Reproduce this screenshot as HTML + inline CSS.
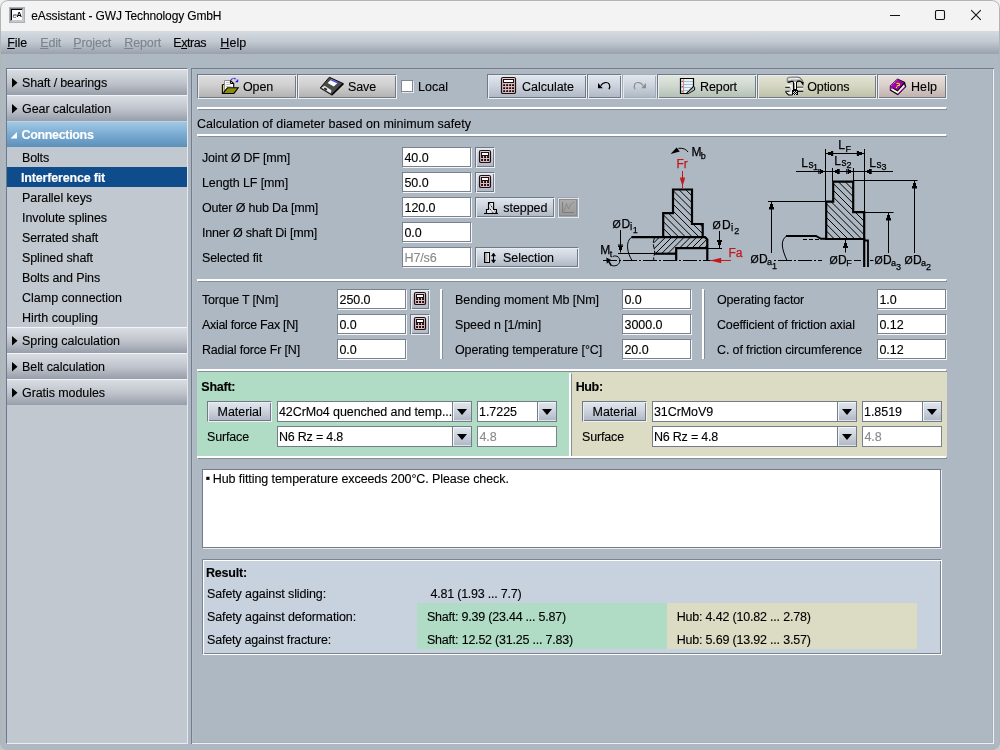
<!DOCTYPE html>
<html><head><meta charset="utf-8"><title>eAssistant - GWJ Technology GmbH</title>
<style>
*{box-sizing:border-box;margin:0;padding:0}
html,body{width:1000px;height:750px;overflow:hidden;background:#efefef}
#cbl,#cbr{position:absolute;bottom:0;width:12px;height:12px;background:#c4c4c4}
#cbl{left:0}#cbr{right:0;background:#cdcdcd}
#frame{position:absolute;left:0;top:0;width:1000px;height:750px;border:1px solid #b4b4b4;border-radius:8px;pointer-events:none}
body{font-family:"Liberation Sans",sans-serif;font-size:12.5px;color:#000;position:relative}
#win{position:absolute;left:0;top:0;width:1000px;height:750px;background:#aeb8c3;border-radius:8px;overflow:hidden;will-change:transform}
#title{position:absolute;left:0;top:0;width:1000px;height:31px;background:#f3f3f3}
#ttext{letter-spacing:-0.14px;font-size:12px}
#menu{position:absolute;left:0;top:31px;width:1000px;height:23px;background:linear-gradient(#d5dbe1,#c3cad2 45%,#98a1ad)}
.t{position:absolute;white-space:nowrap;line-height:14px;-webkit-text-stroke:0.12px currentColor}
.b{font-weight:bold}
.w{color:#fff}
.dis{color:#8a8a8a}
.m.dis{color:#7c838c}
.m u{text-decoration:underline;text-underline-offset:1px}
#side{position:absolute;left:6px;top:68px;width:182px;height:676px;background:#c2c8d0;border-left:1px solid #6f7a86;border-top:1px solid #6f7a86;border-right:1px solid #e4e8ec;border-bottom:1px solid #e9edf1}
.hdr{position:absolute;left:7px;width:180px;height:26px;border-top:1px solid #f2f4f6;background:linear-gradient(#d9dde3,#c0c5cd 50%,#989eaa)}
.hdr.open{background:linear-gradient(#a3c7e3,#79abd2 50%,#5d90b9);border-top:1px solid #b9d5ea}
.it{position:absolute;left:7px;width:180px;height:20px}
.it.sel{background:#0f4c8c}
.hline{position:absolute;height:1px;background:#eef1f4}
#main{position:absolute;left:191px;top:68px;width:803px;height:676px;box-shadow:inset 1px 1px 0 #737d89, inset -1px -1px 0 #eef1f4, inset -2px -2px 0 #a6b0bb, inset 2px 2px 0 #b4bec9}
.btn{position:absolute;border-top:1px solid #707985;border-left:1px solid #707985;border-right:1px solid #eef1f4;border-bottom:1px solid #eef1f4;box-shadow:inset 1px 1px 0 #e9edf1, inset -1px -1px 0 #707985}
.btn.grey{background:linear-gradient(#dedede,#cfcfcf 45%,#b0b0b0)}
.btn.blue{background:linear-gradient(#e2e7ee,#cdd4de 45%,#adb6c3)}
.btn.green{background:linear-gradient(#e0e7e0,#d0d9d0 45%,#b3bfb3)}
.btn.olive{background:linear-gradient(#e2e3d4,#d5d7c3 45%,#bcbfa6)}
.btn.pink{background:linear-gradient(#e8e1de,#dacfcb 45%,#beb0ac)}
.btn.gdis{background:#aeb8c3;box-shadow:inset 1px 1px 0 #dde3ea, inset -1px -1px 0 #9ba5b0;border-color:#9ba5b0 #e3e8ee #e3e8ee #9ba5b0}
.btn.disb{box-shadow:inset 1px 1px 0 #e3e8ed, inset -1px -1px 0 #a3adb8;border-color:#a3adb8 #dfe4e9 #dfe4e9 #a3adb8}
.chk{position:absolute;width:12px;height:12px;background:#fff;border:1px solid #7f8893;box-shadow:1px 1px 0 #e6eaee}
.sep{position:absolute;height:3px;border-left:1px solid #fff;border-top:2px solid #fff;border-bottom:1px solid #858d97;border-right:1px solid #858d97}
.vsep{position:absolute;width:3px;border-top:1px solid #fff;border-left:2px solid #fff;border-right:1px solid #858d97}
.vsepw{position:absolute;width:3px;background:#fff;border-right:1px solid #9aa3ad}
.inp{position:absolute;height:20px;background:#fff;border:1px solid #79828d;box-shadow:1px 1px 0 #f4f6f8}
.inp.box{height:21px;box-shadow:none}
.combo{position:absolute;height:21px;background:#fff;border:1px solid #737c87}
.combo i{position:absolute;right:0;top:0;width:19px;height:19px;background:linear-gradient(#e2e7ee,#cdd4de 45%,#adb6c3);border-left:1px solid #737c87;box-shadow:inset 1px 1px 0 #f4f6f9, inset 0 -1px 0 #dfe4ea}
.combo i b{position:absolute;left:3.5px;top:7px;width:0;height:0;border-left:5px solid transparent;border-right:5px solid transparent;border-top:6px solid #000}
.pan{position:absolute}
#diasvg text{stroke:#000;stroke-width:.25px}
#diasvg text[fill]{stroke:#c4161c}
#msg{position:absolute;left:202px;top:469px;width:739px;height:79px;background:#fff;border:1px solid #737c87;box-shadow:1px 1px 0 #e8ecf0}
#res{position:absolute;left:202px;top:559px;width:740px;height:96px;background:#c8d2de;border-top:1px solid #7b8590;border-left:1px solid #7b8590;border-right:1px solid #fff;border-bottom:1px solid #fff;box-shadow:inset 1px 1px 0 #fff, inset -1px -1px 0 #7b8590}
</style></head>
<body><div id="cbl"></div><div id="cbr"></div><div id="win">
<div id="title"></div>
<div class="t" id="ttext" style="left:31.3px;top:9px">eAssistant - GWJ Technology GmbH</div>
<svg id="wc" width="110" height="31" viewBox="0 0 110 31" style="position:absolute;left:885px;top:0">
<path d="M5 15.5h10" stroke="#111" stroke-width="1" fill="none"/>
<rect x="50.5" y="10.5" width="9" height="9" rx="1.2" stroke="#111" stroke-width="1.1" fill="none"/>
<path d="M86.2 10.2l9.6 9.6M95.8 10.2l-9.6 9.6" stroke="#111" stroke-width="1.1" fill="none"/></svg>
<div id="menu"></div>
<div class="t m " style="left:7.2px;top:36px;letter-spacing:-0.035px;"><u>F</u>ile</div>
<div class="t m dis" style="left:40.2px;top:36px;letter-spacing:-0.135px;"><u>E</u>dit</div>
<div class="t m dis" style="left:73.2px;top:36px;letter-spacing:-0.129px;"><u>P</u>roject</div>
<div class="t m dis" style="left:124.2px;top:36px;letter-spacing:-0.086px;"><u>R</u>eport</div>
<div class="t m " style="left:173.2px;top:36px;letter-spacing:-0.404px;">E<u>x</u>tras</div>
<div class="t m " style="left:220.3px;top:36px;letter-spacing:0.073px;"><u>H</u>elp</div>
<div id="side"></div>
<div class="hdr" style="top:69px"><svg width="8" height="10" viewBox="0 0 8 10" style="position:absolute;left:5px;top:8px"><path d="M0 0L5.5 4.75L0 9.5Z" fill="#000"/></svg></div>
<div class="t " style="left:22px;top:76px;letter-spacing:-0.160px;">Shaft / bearings</div>
<div class="hdr" style="top:95px"><svg width="8" height="10" viewBox="0 0 8 10" style="position:absolute;left:5px;top:8px"><path d="M0 0L5.5 4.75L0 9.5Z" fill="#000"/></svg></div>
<div class="t " style="left:22px;top:102px;letter-spacing:-0.083px;">Gear calculation</div>
<div class="hdr open" style="top:121px"><svg width="8" height="10" viewBox="0 0 8 10" style="position:absolute;left:3px;top:10px"><path d="M7 0V6.5H0.5Z" fill="#fff"/></svg></div>
<div class="t b w" style="left:21.5px;top:128px;letter-spacing:-0.336px;">Connections</div>
<div class="t " style="left:22px;top:151px;letter-spacing:-0.158px;">Bolts</div>
<div class="it sel" style="top:167px"></div>
<div class="t b w" style="left:21px;top:171px;letter-spacing:-0.177px;">Interference fit</div>
<div class="t " style="left:22px;top:191px;letter-spacing:-0.066px;">Parallel keys</div>
<div class="t " style="left:22px;top:211px;letter-spacing:-0.073px;">Involute splines</div>
<div class="t " style="left:22px;top:231px;letter-spacing:-0.180px;">Serrated shaft</div>
<div class="t " style="left:22px;top:251px;letter-spacing:-0.098px;">Splined shaft</div>
<div class="t " style="left:22px;top:271px;letter-spacing:-0.136px;">Bolts and Pins</div>
<div class="t " style="left:22px;top:291px;letter-spacing:-0.003px;">Clamp connection</div>
<div class="t " style="left:22px;top:311px;letter-spacing:-0.031px;">Hirth coupling</div>
<div class="hdr" style="top:327px"><svg width="8" height="10" viewBox="0 0 8 10" style="position:absolute;left:5px;top:8px"><path d="M0 0L5.5 4.75L0 9.5Z" fill="#000"/></svg></div>
<div class="t " style="left:22px;top:334px;letter-spacing:-0.037px;">Spring calculation</div>
<div class="hdr" style="top:353px"><svg width="8" height="10" viewBox="0 0 8 10" style="position:absolute;left:5px;top:8px"><path d="M0 0L5.5 4.75L0 9.5Z" fill="#000"/></svg></div>
<div class="t " style="left:22px;top:360px;letter-spacing:-0.067px;">Belt calculation</div>
<div class="hdr" style="top:379px"><svg width="8" height="10" viewBox="0 0 8 10" style="position:absolute;left:5px;top:8px"><path d="M0 0L5.5 4.75L0 9.5Z" fill="#000"/></svg></div>
<div class="t " style="left:22px;top:386px;letter-spacing:-0.076px;">Gratis modules</div>
<div id="main"></div>
<div class="btn grey" style="left:197px;top:74px;width:100px;height:25px"></div>
<div class="t " style="left:243px;top:80px;letter-spacing:-0.145px;">Open</div>
<div class="btn grey" style="left:297px;top:74px;width:100px;height:25px"></div>
<div class="t " style="left:348px;top:80px;letter-spacing:-0.123px;">Save</div>
<div class="chk" style="left:401px;top:80px"></div>
<div class="t " style="left:418px;top:80px;letter-spacing:0.023px;">Local</div>
<div class="btn blue" style="left:487px;top:74px;width:100px;height:25px"></div>
<div class="t " style="left:522px;top:80px;letter-spacing:-0.012px;">Calculate</div>
<div class="btn blue" style="left:587px;top:74px;width:35px;height:25px"></div>
<div class="btn blue disb" style="left:622px;top:74px;width:35px;height:25px"></div>
<div class="btn green" style="left:657px;top:74px;width:100px;height:25px"></div>
<div class="t " style="left:700px;top:80px;letter-spacing:-0.086px;">Report</div>
<div class="btn olive" style="left:757px;top:74px;width:120px;height:25px"></div>
<div class="t " style="left:807.3px;top:80px;letter-spacing:-0.154px;">Options</div>
<div class="btn pink" style="left:877px;top:74px;width:70px;height:25px"></div>
<div class="t " style="left:911px;top:80px;letter-spacing:0.073px;">Help</div>
<div class="sep" style="left:197px;top:107px;width:750px"></div>
<div class="t " style="left:197px;top:117px;letter-spacing:0.005px;">Calculation of diameter based on minimum safety</div>
<div class="sep" style="left:197px;top:134px;width:750px"></div>
<div class="t " style="left:202px;top:151px;letter-spacing:-0.199px;">Joint Ø DF [mm]</div>
<div class="inp " style="left:402px;top:147px;width:69px"></div>
<div class="t " style="left:404.5px;top:151px;letter-spacing:-0.082px;">40.0</div>
<div class="t " style="left:202px;top:176px;letter-spacing:-0.110px;">Length LF [mm]</div>
<div class="inp " style="left:402px;top:172px;width:69px"></div>
<div class="t " style="left:404.5px;top:176px;letter-spacing:-0.082px;">50.0</div>
<div class="t " style="left:202px;top:201px;letter-spacing:-0.183px;">Outer Ø hub Da [mm]</div>
<div class="inp " style="left:402px;top:197px;width:69px"></div>
<div class="t " style="left:404.5px;top:201px;letter-spacing:-0.056px;">120.0</div>
<div class="t " style="left:202px;top:226px;letter-spacing:-0.180px;">Inner Ø shaft Di [mm]</div>
<div class="inp " style="left:402px;top:222px;width:69px"></div>
<div class="t " style="left:404.5px;top:226px;letter-spacing:-0.126px;">0.0</div>
<div class="t " style="left:202px;top:251px;letter-spacing:-0.153px;">Selected fit</div>
<div class="inp dis" style="left:402px;top:247px;width:69px"></div>
<div class="t dis" style="left:404.5px;top:251px;letter-spacing:-0.131px;">H7/s6</div>
<div class="btn blue" style="left:475px;top:147px;width:20px;height:21px"></div>
<div class="btn blue" style="left:475px;top:172px;width:20px;height:21px"></div>
<div class="btn blue" style="left:475px;top:197px;width:80px;height:21px"></div>
<div class="t " style="left:503.3px;top:201px;letter-spacing:-0.069px;">stepped</div>
<div class="btn gdis" style="left:557px;top:197px;width:22px;height:21px"></div>
<div class="btn blue" style="left:475px;top:247px;width:104px;height:21px"></div>
<div class="t " style="left:503px;top:251px;letter-spacing:-0.047px;">Selection</div>
<svg id="diasvg" width="360" height="142" viewBox="595 137 360 142" style="position:absolute;left:595px;top:137px" font-family="Liberation Sans, sans-serif" font-size="12px"><defs></defs><clipPath id="cl1"><polygon points="673,189.5 692,189.5 692,224 702.7,224 702.7,237 663.2,237 663.2,213.2 673,213.2"/></clipPath><g clip-path="url(#cl1)" stroke="#000" stroke-width="1.0" shape-rendering="geometricPrecision"><line x1="602.5" y1="188" x2="652.5" y2="238"/><line x1="609.3" y1="188" x2="659.3" y2="238"/><line x1="616.1" y1="188" x2="666.1" y2="238"/><line x1="622.9" y1="188" x2="672.9" y2="238"/><line x1="629.7" y1="188" x2="679.7" y2="238"/><line x1="636.5" y1="188" x2="686.5" y2="238"/><line x1="643.3" y1="188" x2="693.3" y2="238"/><line x1="650.1" y1="188" x2="700.1" y2="238"/><line x1="656.9" y1="188" x2="706.9" y2="238"/><line x1="663.7" y1="188" x2="713.7" y2="238"/><line x1="670.5" y1="188" x2="720.5" y2="238"/><line x1="677.3" y1="188" x2="727.3" y2="238"/><line x1="684.1" y1="188" x2="734.1" y2="238"/><line x1="690.9" y1="188" x2="740.9" y2="238"/><line x1="697.7" y1="188" x2="747.7" y2="238"/><line x1="704.5" y1="188" x2="754.5" y2="238"/><line x1="711.3" y1="188" x2="761.3" y2="238"/><line x1="718.1" y1="188" x2="768.1" y2="238"/><line x1="724.9" y1="188" x2="774.9" y2="238"/><line x1="731.7" y1="188" x2="781.7" y2="238"/><line x1="738.5" y1="188" x2="788.5" y2="238"/><line x1="745.3" y1="188" x2="795.3" y2="238"/><line x1="752.1" y1="188" x2="802.1" y2="238"/><line x1="758.9" y1="188" x2="808.9" y2="238"/><line x1="765.7" y1="188" x2="815.7" y2="238"/></g><polygon points="673,189.5 692,189.5 692,224 702.7,224 702.7,237 663.2,237 663.2,213.2 673,213.2" fill="none" stroke="#000" stroke-width="2.2" stroke-linejoin="miter"/><clipPath id="cl2"><polygon points="654,237 707,237 707,248 676,248 676,253.5 654,253.5"/></clipPath><g clip-path="url(#cl2)" stroke="#000" stroke-width="1.0" shape-rendering="geometricPrecision"><line x1="641.0" y1="237" x2="624.0" y2="254"/><line x1="647.2" y1="237" x2="630.2" y2="254"/><line x1="653.4" y1="237" x2="636.4" y2="254"/><line x1="659.6" y1="237" x2="642.6" y2="254"/><line x1="665.8" y1="237" x2="648.8" y2="254"/><line x1="672.0" y1="237" x2="655.0" y2="254"/><line x1="678.2" y1="237" x2="661.2" y2="254"/><line x1="684.4" y1="237" x2="667.4" y2="254"/><line x1="690.6" y1="237" x2="673.6" y2="254"/><line x1="696.8" y1="237" x2="679.8" y2="254"/><line x1="703.0" y1="237" x2="686.0" y2="254"/><line x1="709.2" y1="237" x2="692.2" y2="254"/><line x1="715.4" y1="237" x2="698.4" y2="254"/><line x1="721.6" y1="237" x2="704.6" y2="254"/><line x1="727.8" y1="237" x2="710.8" y2="254"/><line x1="734.0" y1="237" x2="717.0" y2="254"/><line x1="740.2" y1="237" x2="723.2" y2="254"/><line x1="746.4" y1="237" x2="729.4" y2="254"/><line x1="752.6" y1="237" x2="735.6" y2="254"/></g><path d="M631.5,237.2H705L707.3,239.5V260.5" fill="none" stroke="#000" stroke-width="2.2"/><path d="M707,248.2H676.2V260.5" fill="none" stroke="#000" stroke-width="2.2"/><path d="M654,253.7H676.5" fill="none" stroke="#000" stroke-width="2.2"/><path d="M618,253.5H654" fill="none" stroke="#000" stroke-width="1"/><path d="M603,260.5H710" fill="none" stroke="#000" stroke-width="1" stroke-dasharray="14 2 2 2"/><path d="M632,237C628.5,239 627.3,243 627.6,248C628,253 630,257 632,260.5" fill="none" stroke="#000" stroke-width="1"/><path d="M654.5,238C653,241 653,244 653.8,247C654.8,250 655,253 654,256C653.5,258 653.5,259 654,260.5" fill="none" stroke="#000" stroke-width="1" stroke-dasharray="5 1.5"/><path d="M708,248.5H722" stroke="#000" stroke-width="1"/><text x="612.5" y="227.5" font-size="10.5px">Ø</text><text x="621.5" y="227.5">D</text><text x="630" y="229.5" font-size="10px">i</text><text x="632.8" y="233" font-size="9px">1</text><line x1="620.5" y1="230" x2="620.5" y2="252.5" stroke="#000" stroke-width="1"/><polygon points="618.0,245.5 623.0,245.5 620.5,252.5" fill="#000" shape-rendering="crispEdges"/><rect x="618.0" y="244.5" width="5.0" height="1.2" fill="#000"/><text x="712.5" y="229" font-size="10.5px">Ø</text><text x="722" y="228.5">D</text><text x="731" y="230.5" font-size="10px">i</text><text x="734.3" y="234" font-size="9px">2</text><line x1="719.5" y1="231" x2="719.5" y2="248" stroke="#000" stroke-width="1"/><polygon points="717.0,241 722.0,241 719.5,248" fill="#000" shape-rendering="crispEdges"/><rect x="717.0" y="240" width="5.0" height="1.2" fill="#000"/><text x="600.3" y="254">M</text><text x="609.8" y="256.5" font-size="9px">t</text><path d="M613,256.3C617,255 620,257.5 619.8,261C619.5,264.5 616,266.8 611.5,265.5" fill="none" stroke="#000" stroke-width="1"/><polygon points="606.3,257.6 611.3,260 609.5,261.3 612,265.3 610.5,266 608.3,262.3 606.8,263.8" fill="#000"/><text x="676.5" y="168.3" fill="#c4161c">Fr</text><line x1="682.5" y1="171" x2="682.5" y2="188.5" stroke="#c4161c" stroke-width="1"/><polygon points="680,178.5 685,178.5 682.5,186" fill="#c4161c"/><rect x="680" y="177.5" width="5" height="1.2" fill="#c4161c"/><text x="728.5" y="256.8" fill="#c4161c">Fa</text><line x1="710" y1="260.5" x2="731" y2="260.5" stroke="#c4161c" stroke-width="1"/><polygon points="710,260.5 720.5,258 720.5,263" fill="#c4161c"/><rect x="720" y="258" width="1.2" height="5" fill="#c4161c"/><text x="691.5" y="156.3">M</text><text x="700.8" y="158.8" font-size="9px">b</text><path d="M688,152C686.5,149.5 683,147.8 678.5,148.3" fill="none" stroke="#000" stroke-width="1"/><polygon points="670.6,154 676.6,147.6 679.8,151.4" fill="#000"/><clipPath id="cl3"><polygon points="833.2,181.7 853.2,181.7 853.2,212.2 864.2,212.2 864.2,239 826.2,239 826.2,201.7 833.2,201.7"/></clipPath><g clip-path="url(#cl3)" stroke="#000" stroke-width="1.0" shape-rendering="geometricPrecision"><line x1="755.0" y1="180" x2="815.0" y2="240"/><line x1="761.8" y1="180" x2="821.8" y2="240"/><line x1="768.6" y1="180" x2="828.6" y2="240"/><line x1="775.4" y1="180" x2="835.4" y2="240"/><line x1="782.2" y1="180" x2="842.2" y2="240"/><line x1="789.0" y1="180" x2="849.0" y2="240"/><line x1="795.8" y1="180" x2="855.8" y2="240"/><line x1="802.6" y1="180" x2="862.6" y2="240"/><line x1="809.4" y1="180" x2="869.4" y2="240"/><line x1="816.2" y1="180" x2="876.2" y2="240"/><line x1="823.0" y1="180" x2="883.0" y2="240"/><line x1="829.8" y1="180" x2="889.8" y2="240"/><line x1="836.6" y1="180" x2="896.6" y2="240"/><line x1="843.4" y1="180" x2="903.4" y2="240"/><line x1="850.2" y1="180" x2="910.2" y2="240"/><line x1="857.0" y1="180" x2="917.0" y2="240"/><line x1="863.8" y1="180" x2="923.8" y2="240"/><line x1="870.6" y1="180" x2="930.6" y2="240"/><line x1="877.4" y1="180" x2="937.4" y2="240"/><line x1="884.2" y1="180" x2="944.2" y2="240"/><line x1="891.0" y1="180" x2="951.0" y2="240"/><line x1="897.8" y1="180" x2="957.8" y2="240"/><line x1="904.6" y1="180" x2="964.6" y2="240"/><line x1="911.4" y1="180" x2="971.4" y2="240"/><line x1="918.2" y1="180" x2="978.2" y2="240"/><line x1="925.0" y1="180" x2="985.0" y2="240"/><line x1="931.8" y1="180" x2="991.8" y2="240"/></g><polygon points="833.2,181.7 853.2,181.7 853.2,212.2 864.2,212.2 864.2,239 826.2,239 826.2,201.7 833.2,201.7" fill="none" stroke="#000" stroke-width="2.2" stroke-linejoin="miter"/><path d="M825.5,149V201M864.5,149V212M832.5,168V181M853.5,168V181" stroke="#000" stroke-width="1" fill="none"/><path d="M826,153.5H864" stroke="#000" stroke-width="1"/><polygon points="832,151.0 832,156.0 826,153.5" fill="#000" shape-rendering="crispEdges"/><rect x="832" y="151.0" width="1.2" height="5.0" fill="#000"/><polygon points="858,151.0 858,156.0 864,153.5" fill="#000" shape-rendering="crispEdges"/><rect x="856.8" y="151.0" width="1.2" height="5.0" fill="#000"/><text x="838.3" y="148.7">L</text><text x="845.5" y="151.7" font-size="9px">F</text><path d="M796,171.5H893" stroke="#000" stroke-width="1"/><polygon points="819.5,169.0 819.5,174.0 825.5,171.5" fill="#000" shape-rendering="crispEdges"/><rect x="818.3" y="169.0" width="1.2" height="5.0" fill="#000"/><polygon points="838.5,169.0 838.5,174.0 832.5,171.5" fill="#000" shape-rendering="crispEdges"/><rect x="838.5" y="169.0" width="1.2" height="5.0" fill="#000"/><polygon points="847.5,169.0 847.5,174.0 853.5,171.5" fill="#000" shape-rendering="crispEdges"/><rect x="846.3" y="169.0" width="1.2" height="5.0" fill="#000"/><polygon points="870.5,169.0 870.5,174.0 864.5,171.5" fill="#000" shape-rendering="crispEdges"/><rect x="870.5" y="169.0" width="1.2" height="5.0" fill="#000"/><text x="801.3" y="167.2">L</text><text x="808.5" y="168.2" font-size="10px">s</text><text x="813" y="169.7" font-size="9px">1</text><text x="834.3" y="165.2">L</text><text x="841.5" y="166.2" font-size="10px">s</text><text x="846.5" y="167.7" font-size="9px">2</text><text x="869.3" y="167.2">L</text><text x="876.5" y="168.2" font-size="10px">s</text><text x="881.5" y="169.7" font-size="9px">3</text><path d="M854,180.5H917.5" stroke="#000" stroke-width="1"/><line x1="914.5" y1="253" x2="914.5" y2="180.5" stroke="#000" stroke-width="1"/><polygon points="912.0,187.5 917.0,187.5 914.5,180.5" fill="#000" shape-rendering="crispEdges"/><rect x="912.0" y="187.3" width="5.0" height="1.2" fill="#000"/><text x="904.5" y="263.5" font-size="10.5px">Ø</text><text x="913" y="263.5">D</text><text x="921" y="265.5" font-size="9px">a</text><text x="926" y="270" font-size="9px">2</text><path d="M865,212.5H893.5" stroke="#000" stroke-width="1"/><line x1="888.5" y1="253" x2="888.5" y2="212.5" stroke="#000" stroke-width="1"/><polygon points="886.0,219.5 891.0,219.5 888.5,212.5" fill="#000" shape-rendering="crispEdges"/><rect x="886.0" y="219.3" width="5.0" height="1.2" fill="#000"/><text x="874.5" y="263.5" font-size="10.5px">Ø</text><text x="883" y="263.5">D</text><text x="891" y="265.5" font-size="9px">a</text><text x="896" y="270" font-size="9px">3</text><path d="M768,201.5H825" stroke="#000" stroke-width="1"/><line x1="771.5" y1="253" x2="771.5" y2="201.5" stroke="#000" stroke-width="1"/><polygon points="769.0,208.5 774.0,208.5 771.5,201.5" fill="#000" shape-rendering="crispEdges"/><rect x="769.0" y="208.3" width="5.0" height="1.2" fill="#000"/><text x="750.5" y="263" font-size="10.5px">Ø</text><text x="759" y="263">D</text><text x="767" y="264.7" font-size="9px">a</text><text x="772" y="269.3" font-size="9px">1</text><line x1="845.5" y1="252.5" x2="845.5" y2="240" stroke="#000" stroke-width="1"/><polygon points="843.0,247 848.0,247 845.5,240" fill="#000" shape-rendering="crispEdges"/><rect x="843.0" y="246.8" width="5.0" height="1.2" fill="#000"/><text x="829.5" y="263.7" font-size="10.5px">Ø</text><text x="838" y="263.7">D</text><text x="846.3" y="266" font-size="9px">F</text><path d="M854,260.5H861M870,260.5H873.5" stroke="#000" stroke-width="1"/><path d="M864.2,238V267" stroke="#000" stroke-width="2.2"/><path d="M865,240.5H868V267" stroke="#000" stroke-width="1.8" fill="none"/><path d="M786,236H816L821,238.8H826" fill="none" stroke="#000" stroke-width="2"/><path d="M786.5,236C783.5,238 782.3,241 782.3,245C782.5,250 785,256 787,260.5" fill="none" stroke="#000" stroke-width="1"/><path d="M803,239.5H821" stroke="#000" stroke-width="1" stroke-dasharray="4 2"/><path d="M774,260.5H822" stroke="#000" stroke-width="1" stroke-dasharray="2 2 14 2"/></svg>
<div class="sep" style="left:197px;top:279px;width:750px"></div>
<div class="t " style="left:202px;top:293px;letter-spacing:-0.198px;">Torque T [Nm]</div>
<div class="inp " style="left:337px;top:289px;width:69px"></div>
<div class="t " style="left:339.5px;top:293px;letter-spacing:-0.056px;">250.0</div>
<div class="t " style="left:455px;top:293px;letter-spacing:-0.054px;">Bending moment Mb [Nm]</div>
<div class="inp " style="left:622px;top:289px;width:69px"></div>
<div class="t " style="left:624.5px;top:293px;letter-spacing:-0.126px;">0.0</div>
<div class="t " style="left:717px;top:293px;letter-spacing:-0.164px;">Operating factor</div>
<div class="inp " style="left:877px;top:289px;width:69px"></div>
<div class="t " style="left:879.5px;top:293px;letter-spacing:-0.126px;">1.0</div>
<div class="t " style="left:202px;top:318px;letter-spacing:-0.322px;">Axial force Fax [N]</div>
<div class="inp " style="left:337px;top:314px;width:69px"></div>
<div class="t " style="left:339.5px;top:318px;letter-spacing:-0.126px;">0.0</div>
<div class="t " style="left:455px;top:318px;letter-spacing:-0.104px;">Speed n [1/min]</div>
<div class="inp " style="left:622px;top:314px;width:69px"></div>
<div class="t " style="left:624.5px;top:318px;letter-spacing:-0.039px;">3000.0</div>
<div class="t " style="left:717px;top:318px;letter-spacing:-0.153px;">Coefficient of friction axial</div>
<div class="inp " style="left:877px;top:314px;width:69px"></div>
<div class="t " style="left:879.5px;top:318px;letter-spacing:-0.082px;">0.12</div>
<div class="t " style="left:202px;top:343px;letter-spacing:-0.180px;">Radial force Fr [N]</div>
<div class="inp " style="left:337px;top:339px;width:69px"></div>
<div class="t " style="left:339.5px;top:343px;letter-spacing:-0.126px;">0.0</div>
<div class="t " style="left:455px;top:343px;letter-spacing:-0.123px;">Operating temperature [°C]</div>
<div class="inp " style="left:622px;top:339px;width:69px"></div>
<div class="t " style="left:624.5px;top:343px;letter-spacing:-0.082px;">20.0</div>
<div class="t " style="left:717px;top:343px;letter-spacing:-0.131px;">C. of friction circumference</div>
<div class="inp " style="left:877px;top:339px;width:69px"></div>
<div class="t " style="left:879.5px;top:343px;letter-spacing:-0.082px;">0.12</div>
<div class="btn blue" style="left:410px;top:289px;width:20px;height:21px"></div>
<div class="btn blue" style="left:410px;top:314px;width:20px;height:21px"></div>
<div class="vsep" style="left:440px;top:289px;height:70px"></div>
<div class="vsep" style="left:702px;top:289px;height:70px"></div>
<div class="sep" style="left:197px;top:369px;width:750px"></div>
<div class="pan" style="left:197px;top:372px;width:375px;height:84px;background:#b0dcc5"></div>
<div class="pan" style="left:572px;top:372px;width:375px;height:84px;background:#dcdcc4"></div>
<div class="vsep" style="left:569px;top:373px;height:83px"></div>
<div class="t b" style="left:201.3px;top:380px;letter-spacing:-0.235px;">Shaft:</div>
<div class="t b" style="left:575.7px;top:380px;letter-spacing:-0.365px;">Hub:</div>
<div class="btn blue" style="left:207px;top:401px;width:65px;height:21px"></div>
<div class="t " style="left:217.6px;top:405px;letter-spacing:-0.057px;">Material</div>
<div class="btn blue" style="left:582px;top:401px;width:65px;height:21px"></div>
<div class="t " style="left:592.6px;top:405px;letter-spacing:-0.057px;">Material</div>
<div class="combo" style="left:277px;top:401px;width:195px"><i><b></b></i></div>
<div class="t " style="left:279px;top:405px;letter-spacing:-0.100px;">42CrMo4 quenched and temp...</div>
<div class="combo" style="left:477px;top:401px;width:80px"><i><b></b></i></div>
<div class="t " style="left:479px;top:405px;letter-spacing:-0.039px;">1.7225</div>
<div class="combo" style="left:652px;top:401px;width:205px"><i><b></b></i></div>
<div class="t " style="left:654px;top:405px;letter-spacing:-0.093px;">31CrMoV9</div>
<div class="combo" style="left:862px;top:401px;width:80px"><i><b></b></i></div>
<div class="t " style="left:864px;top:405px;letter-spacing:-0.039px;">1.8519</div>
<div class="t " style="left:207px;top:430px;letter-spacing:-0.154px;">Surface</div>
<div class="t " style="left:582px;top:430px;letter-spacing:-0.154px;">Surface</div>
<div class="combo" style="left:277px;top:426px;width:195px"><i><b></b></i></div>
<div class="t " style="left:279px;top:430px;letter-spacing:-0.214px;">N6 Rz = 4.8</div>
<div class="inp dis box" style="left:477px;top:426px;width:80px"></div>
<div class="t dis" style="left:479.5px;top:430px;letter-spacing:-0.126px;">4.8</div>
<div class="combo" style="left:652px;top:426px;width:205px"><i><b></b></i></div>
<div class="t " style="left:654px;top:430px;letter-spacing:-0.214px;">N6 Rz = 4.8</div>
<div class="inp dis box" style="left:862px;top:426px;width:80px"></div>
<div class="t dis" style="left:864.5px;top:430px;letter-spacing:-0.126px;">4.8</div>
<div class="sep" style="left:197px;top:456px;width:750px"></div>
<div id="msg"></div>
<div class="t " style="left:205.4px;top:471px;letter-spacing:-0.431px;">▪</div>
<div class="t " style="left:212.8px;top:472px;letter-spacing:-0.083px;">Hub fitting temperature exceeds 200°C. Please check.</div>
<div id="res"></div>
<div class="t b" style="left:206px;top:566px;letter-spacing:-0.195px;">Result:</div>
<div class="t " style="left:207px;top:587px;letter-spacing:-0.113px;">Safety against sliding:</div>
<div class="t " style="left:430.5px;top:587px;letter-spacing:-0.221px;">4.81 (1.93 ... 7.7)</div>
<div class="pan" style="left:417px;top:603px;width:250px;height:46px;background:#b0dcc5"></div>
<div class="pan" style="left:667px;top:603px;width:250px;height:46px;background:#dcdcc4"></div>
<div class="t " style="left:207px;top:610px;letter-spacing:-0.118px;">Safety against deformation:</div>
<div class="t " style="left:427px;top:610px;letter-spacing:-0.223px;">Shaft: 9.39 (23.44 ... 5.87)</div>
<div class="t " style="left:676.7px;top:610px;letter-spacing:-0.191px;">Hub: 4.42 (10.82 ... 2.78)</div>
<div class="t " style="left:207px;top:633px;letter-spacing:-0.189px;">Safety against fracture:</div>
<div class="t " style="left:427px;top:633px;letter-spacing:-0.213px;">Shaft: 12.52 (31.25 ... 7.83)</div>
<div class="t " style="left:676.7px;top:633px;letter-spacing:-0.191px;">Hub: 5.69 (13.92 ... 3.57)</div>
<svg id="icons" width="1000" height="750" viewBox="0 0 1000 750" style="position:absolute;left:0;top:0;pointer-events:none" font-family="Liberation Sans, sans-serif"><rect x="9.5" y="7.5" width="15" height="15" fill="#fff" stroke="#a3b3c5"/><path d="M10,8H24L23,9H11V21L10,22Z" fill="#7c7c7c"/><path d="M11,9H23L22,10H12V20L11,21Z" fill="#000"/><path d="M24,8V22H10L12,20H22V10Z" fill="#c9c9c9"/><text x="12.6" y="17.8" font-size="8px" fill="#3a3a3a" font-style="italic">e</text><text x="16.6" y="17.4" font-size="7.5px" font-weight="bold">A</text><path d="M224.5,80.5H230.2L233.6,83.6V91.5H224.5Z" fill="#fff"/><path d="M224.5,91V80.5H230" fill="none" stroke="#8e8e8e" stroke-width="1"/><path d="M230.2,80.3L233.7,83.6V87.6" fill="none" stroke="#000" stroke-width="1.1"/><path d="M230.4,80.8V83.5H233.4" fill="none" stroke="#000" stroke-width="1"/><path d="M226,82.5H229.6M226,84.5H230.4M226,86.5H231.6" stroke="#c0c0c0" stroke-width="1"/><path d="M222.4,84.6V93.4H234.2" fill="none" stroke="#000" stroke-width="1.1"/><path d="M222.6,84.6H224.2" stroke="#000" stroke-width="1"/><path d="M223,85.2H224.2V91.8L223,93Z" fill="#dcd458"/><path d="M223.6,92.9L227.6,87.9H237.9L234.1,92.9Z" fill="#8e8c06"/><path d="M223.5,92.7L227.5,87.8H238.2L234,93.4" fill="none" stroke="#000" stroke-width="1.1"/><path d="M231,80C232.2,78 235,77.8 236.4,79.8" fill="none" stroke="#2828e0" stroke-width="1.1" stroke-dasharray="2.2 .8"/><path d="M238.2,79V82.2H235Z" fill="#1818f0"/><path d="M329.3,77.2L343.3,83.6L331.8,95L320.2,88Z" fill="#4b4b4b" stroke="#111" stroke-width="1"/><path d="M331.5,79.3L338.2,82.6L333.8,86.6L327.6,83Z" fill="#fff"/><path d="M331.5,79.3L338.2,82.6L337.4,83.6L330.6,80.2Z" fill="#3a3aff"/><path d="M321.5,87.8L324.5,85.8L331.5,90.2L330.6,93.2Z" fill="#e8e8e8"/><path d="M324.6,87.4L327.4,89L326.4,90.6L323.8,89Z" fill="#222"/><path d="M331.8,95L343.3,83.6" stroke="#000" stroke-width="1.6"/><rect x="501.5" y="77.5" width="14" height="16" rx="1.6" fill="#e0babf" stroke="#1a1012" stroke-width="1.2"/><rect x="502.3" y="78.3" width="12.4" height="1" fill="#ecd5d7" opacity=".8"/><rect x="503.5" y="79.5" width="10" height="3" fill="#fff" stroke="#1a1012" stroke-width="1"/><rect x="503.2" y="84.2" width="1.9" height="1.9" rx=".3" fill="#0c0608"/><rect x="506.2" y="84.2" width="1.9" height="1.9" rx=".3" fill="#0c0608"/><rect x="509.2" y="84.2" width="1.9" height="1.9" rx=".3" fill="#0c0608"/><rect x="512.1" y="84.2" width="1.9" height="1.9" rx=".3" fill="#0c0608"/><rect x="503.2" y="87.2" width="1.9" height="1.9" rx=".3" fill="#0c0608"/><rect x="506.2" y="87.2" width="1.9" height="1.9" rx=".3" fill="#0c0608"/><rect x="509.2" y="87.2" width="1.9" height="1.9" rx=".3" fill="#0c0608"/><rect x="512.1" y="87.2" width="1.9" height="1.9" rx=".3" fill="#0c0608"/><rect x="503.2" y="90.2" width="1.9" height="1.9" rx=".3" fill="#0c0608"/><rect x="506.2" y="90.2" width="1.9" height="1.9" rx=".3" fill="#0c0608"/><rect x="509.2" y="90.2" width="1.9" height="1.9" rx=".3" fill="#0c0608"/><rect x="512.1" y="90.2" width="1.9" height="1.9" rx=".3" fill="#0c0608"/><path d="M598,83V88.2H602.8Z" fill="#000"/><path d="M600.8,85.6C603,82 607.5,81.6 609.2,84.2C610.3,86 609.8,87.6 609,89.2" fill="none" stroke="#000" stroke-width="1.2"/><path d="M646,83V88.2H641.2Z" fill="#8d8d8d"/><path d="M643.2,85.6C641,82 636.5,81.6 634.8,84.2C633.7,86 634.2,87.6 635,89.2" fill="none" stroke="#8d8d8d" stroke-width="1.2"/><path d="M680.5,78.5H693.5V86.5L686.5,93.5H680.5Z" fill="#f4f0ee" stroke="#000" stroke-width="1.2"/><path d="M684,81.5H693M684,84.5H693M684,87.5H691.5M684,90.5H688.5" stroke="#8cc4ec" stroke-width="1.1"/><path d="M681,81.5H682.5M681,84.5H682.5M681,87.5H682.5M681,90.5H682.5" stroke="#8cc4ec" stroke-width="1.1"/><path d="M683.5,79V93" stroke="#f08080" stroke-width="1.1"/><path d="M682.2,80.8v1M682.2,86.2v1M682.2,91.2v1" stroke="#222" stroke-width="1"/><path d="M693.8,86.5L694.6,87.2V90L688.2,93.6H686.5Z" fill="#b9b9b9" stroke="#000" stroke-width=".9"/><defs><linearGradient id="gws" x1="0" x2="0" y1="0" y2="1"><stop offset="0" stop-color="#fff"/><stop offset=".55" stop-color="#e0e0e0"/><stop offset="1" stop-color="#8c8c8c"/></linearGradient></defs><path d="M785.2,86.6L787,85.2H791.6L792.6,86.2V94.6L791.5,95.2H788.6L785.4,92.2V91.4H789.6L790.4,90.6V88L789.6,87.3H785.4Z" fill="#ececec"/><path d="M785.3,87.3H789.8" stroke="#000" stroke-width="1"/><path d="M785.2,91.3H789.6" stroke="#000" stroke-width=".9"/><path d="M785.6,92.2L788.6,95H792.4" fill="none" stroke="#000" stroke-width="1.1"/><path d="M790.6,87.6V91" stroke="#a8a8a8" stroke-width=".8"/><path d="M786.8,85.3H791.4" stroke="#fff" stroke-width=".8"/><rect x="797" y="87.3" width="6.2" height="4" fill="url(#gws)"/><path d="M797,87.2H803.2" stroke="#000" stroke-width=".8"/><path d="M797,91.4H803.2" stroke="#000" stroke-width=".9"/><path d="M787.2,78.3L788.4,77.4H790L791.4,77.1H798C800.6,77.4 802.3,79.6 803,82L802.9,83.9L801.6,82.3C800.8,81.1 799.4,80.6 797.1,81V82.6H793.3V81.6C791.8,81 790.5,81.5 789.3,82.3H788L787.2,81.6Z" fill="#a9a9a9" stroke="#3c3c3c" stroke-width=".7"/><path d="M788.2,78.6H789.6L791,78.1H798.2C799.4,78.3 800.3,78.9 800.8,79.6H791.2L789.6,80.3H788.2Z" fill="#ececec"/><path d="M787.6,82.2H789.4C790.6,81.3 792,81 793.4,81.7" fill="none" stroke="#000" stroke-width="1.3"/><path d="M797,81.5C799.2,80.7 800.8,81.1 801.8,82.4L802.8,84L803,82" fill="none" stroke="#000" stroke-width="1.3"/><path d="M787.5,78.2V81.6" stroke="#9c9c9c" stroke-width=".7"/><path d="M788.4,77.3H798" stroke="#b4b4b4" stroke-width=".6"/><g shape-rendering="crispEdges"><rect x="793" y="82" width="4" height="8" fill="#fff"/><rect x="793" y="82" width="1" height="8" fill="#000"/><rect x="794" y="83" width="1" height="7" fill="#9a9a9a"/><rect x="796" y="82" width="1" height="8" fill="#000"/><rect x="792" y="90" width="6" height="5" fill="#000"/><rect x="793" y="89" width="4" height="1" fill="#000"/><path d="M794,91h1v1h-1zM796,91h1v1h-1zM793,92h1v1h-1zM795,92h1v1h-1zM794,93h1v1h-1zM796,93h1v1h-1zM793,94h1v1h-1zM795,94h1v1h-1z" fill="#e0e0e0"/></g><path d="M889.8,86L897.5,78.4L905,82.1L906.3,86.8L897.9,95.2L889.8,90.6Z" fill="#000"/><path d="M890.9,87.6L897.6,91.4L904.1,84.2L904.9,86.4L897.8,93.7L890.9,89.7Z" fill="#f2f4f2"/><path d="M897.9,94.3L905.3,86.7" stroke="#a000a8" stroke-width="1"/><path d="M890.3,85.9L897.5,79L904,82.6L897.6,90.3L893.2,88L890.3,88.9Z" fill="#9e00a8"/><path d="M890.3,85.9V89.6L891.3,90.2V87Z" fill="#9e00a8"/><path d="M891.4,85.7L897.4,79.8" stroke="#e0c4e4" stroke-width=".9" stroke-dasharray="1 1"/><text x="895.4" y="88.3" font-size="8px" font-weight="bold" fill="#f5f010" transform="rotate(24 898 85)">?</text><rect x="479.5" y="150.5" width="11" height="12" rx="1.6" fill="#e0babf" stroke="#1a1012" stroke-width="1.2"/><rect x="480.3" y="151.3" width="9.4" height="1" fill="#ecd5d7" opacity=".8"/><rect x="481.5" y="152.5" width="7" height="3" fill="#fff" stroke="#1a1012" stroke-width="1"/><rect x="481.1" y="156.1" width="1.9" height="1.9" rx=".3" fill="#0c0608"/><rect x="484.1" y="156.1" width="1.9" height="1.9" rx=".3" fill="#0c0608"/><rect x="487.1" y="156.1" width="1.9" height="1.9" rx=".3" fill="#0c0608"/><rect x="481.1" y="159.0" width="1.9" height="1.9" rx=".3" fill="#0c0608"/><rect x="484.1" y="159.0" width="1.9" height="1.9" rx=".3" fill="#0c0608"/><rect x="487.1" y="159.0" width="1.9" height="1.9" rx=".3" fill="#0c0608"/><rect x="479.5" y="175.5" width="11" height="12" rx="1.6" fill="#e0babf" stroke="#1a1012" stroke-width="1.2"/><rect x="480.3" y="176.3" width="9.4" height="1" fill="#ecd5d7" opacity=".8"/><rect x="481.5" y="177.5" width="7" height="3" fill="#fff" stroke="#1a1012" stroke-width="1"/><rect x="481.1" y="181.1" width="1.9" height="1.9" rx=".3" fill="#0c0608"/><rect x="484.1" y="181.1" width="1.9" height="1.9" rx=".3" fill="#0c0608"/><rect x="487.1" y="181.1" width="1.9" height="1.9" rx=".3" fill="#0c0608"/><rect x="481.1" y="184.0" width="1.9" height="1.9" rx=".3" fill="#0c0608"/><rect x="484.1" y="184.0" width="1.9" height="1.9" rx=".3" fill="#0c0608"/><rect x="487.1" y="184.0" width="1.9" height="1.9" rx=".3" fill="#0c0608"/><rect x="414.5" y="292.5" width="11" height="12" rx="1.6" fill="#e0babf" stroke="#1a1012" stroke-width="1.2"/><rect x="415.3" y="293.3" width="9.4" height="1" fill="#ecd5d7" opacity=".8"/><rect x="416.5" y="294.5" width="7" height="3" fill="#fff" stroke="#1a1012" stroke-width="1"/><rect x="416.1" y="298.1" width="1.9" height="1.9" rx=".3" fill="#0c0608"/><rect x="419.1" y="298.1" width="1.9" height="1.9" rx=".3" fill="#0c0608"/><rect x="422.1" y="298.1" width="1.9" height="1.9" rx=".3" fill="#0c0608"/><rect x="416.1" y="301.0" width="1.9" height="1.9" rx=".3" fill="#0c0608"/><rect x="419.1" y="301.0" width="1.9" height="1.9" rx=".3" fill="#0c0608"/><rect x="422.1" y="301.0" width="1.9" height="1.9" rx=".3" fill="#0c0608"/><rect x="414.5" y="317.5" width="11" height="12" rx="1.6" fill="#e0babf" stroke="#1a1012" stroke-width="1.2"/><rect x="415.3" y="318.3" width="9.4" height="1" fill="#ecd5d7" opacity=".8"/><rect x="416.5" y="319.5" width="7" height="3" fill="#fff" stroke="#1a1012" stroke-width="1"/><rect x="416.1" y="323.1" width="1.9" height="1.9" rx=".3" fill="#0c0608"/><rect x="419.1" y="323.1" width="1.9" height="1.9" rx=".3" fill="#0c0608"/><rect x="422.1" y="323.1" width="1.9" height="1.9" rx=".3" fill="#0c0608"/><rect x="416.1" y="326.0" width="1.9" height="1.9" rx=".3" fill="#0c0608"/><rect x="419.1" y="326.0" width="1.9" height="1.9" rx=".3" fill="#0c0608"/><rect x="422.1" y="326.0" width="1.9" height="1.9" rx=".3" fill="#0c0608"/><path d="M488.5,202.5H493.6V209.5H496.5V213.5H486.5V209.5H488.5Z" fill="#e6ebf2" stroke="#000" stroke-width="1.1"/><path d="M484,213.5H498" stroke="#000" stroke-width="1.1"/><path d="M489,203L496.2,213M489,207.6L493.2,213" stroke="#000" stroke-width="1" stroke-dasharray="1 .9"/><defs><linearGradient id="ggr" x1="0" x2="0" y1="0" y2="1"><stop offset="0" stop-color="#acacac"/><stop offset="1" stop-color="#999"/></linearGradient></defs><rect x="559.5" y="199.5" width="17" height="16" fill="url(#ggr)" stroke="#8c8c8c"/><path d="M562.5,202V212.5H574" fill="none" stroke="#7c7c7c" stroke-width="1"/><path d="M564,211L566.5,203.5L568.5,209L571,204L574,202" fill="none" stroke="#7e7e7e" stroke-width="1" stroke-dasharray="1.5 .7"/><defs><linearGradient id="gsel" x1="0" x2="1" y1="0" y2="0"><stop offset="0" stop-color="#8a8a8a"/><stop offset="1" stop-color="#fff"/></linearGradient></defs><rect x="484.5" y="252.5" width="5" height="10" fill="url(#gsel)" stroke="#000" stroke-width="1"/><path d="M493.5,254V262" stroke="#000" stroke-width="1"/><path d="M491.5,256L493.5,253L495.5,256ZM491.5,260L493.5,263L495.5,260Z" fill="#000" stroke="#000" stroke-width=".6"/></svg>
<div id="frame"></div>
</div></body></html>
